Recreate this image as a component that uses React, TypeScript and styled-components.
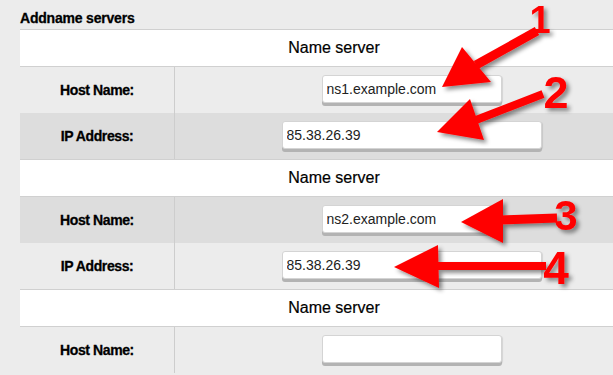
import React from 'react';
import styled, {createGlobalStyle} from "styled-components";

const GlobalStyle = createGlobalStyle`
  html, body {
    margin: 0;
    padding: 0;
    background: #ececec;
    overflow: hidden;
  }
`

type Field = { label: string, value: string, width: number, tone: 'light' | 'dark' }

const servers: Field[][] = [
    [
        {label: 'Host Name:', value: 'ns1.example.com', width: 180, tone: 'light'},
        {label: 'IP Address:', value: '85.38.26.39', width: 260, tone: 'dark'},
    ],
    [
        {label: 'Host Name:', value: 'ns2.example.com', width: 180, tone: 'dark'},
        {label: 'IP Address:', value: '85.38.26.39', width: 260, tone: 'light'},
    ],
    [
        {label: 'Host Name:', value: '', width: 180, tone: 'light'},
    ],
]

const arrows = [
    {tip: '442,87 462,47 491,82', from: [476, 65], to: [537, 31], w: 9, n: '1', nx: 540, ny: 33, size: 38},
    {tip: '437,132 470,99 484,140', from: [476, 120], to: [543, 94], w: 8, n: '2', nx: 556, ny: 108, size: 45},
    {tip: '461,222 503,199 503,243', from: [500, 220], to: [557, 218], w: 9, n: '3', nx: 566, ny: 230, size: 42},
    {tip: '394,267 438,245 439,288', from: [436, 266], to: [546, 266], w: 8, n: '4', nx: 556, ny: 284, size: 46},
]

export default function App() {
    return (
        <Page>
            <GlobalStyle/>
            <Title>Addname servers</Title>

            <Table>
                {servers.map((fields, i) => (
                    <div key={i}>
                        <HeaderRow>Name server</HeaderRow>
                        {fields.map((f, j) => (
                            <Row key={j} tone={f.tone}>
                                <Label>{f.label}</Label>
                                <Value>
                                    <Input $w={f.width} defaultValue={f.value} readOnly/>
                                </Value>
                            </Row>
                        ))}
                    </div>
                ))}
            </Table>

            <Overlay width="613" height="375" viewBox="0 0 613 375">
                <defs>
                    <filter id="shadow" x="-20%" y="-20%" width="140%" height="140%">
                        <feDropShadow dx="3" dy="3" stdDeviation="2" floodColor="#000" floodOpacity="0.45"/>
                    </filter>
                </defs>
                {arrows.map(a => (
                    <g key={a.n} filter="url(#shadow)" fill="#ff0000">
                        <line x1={a.from[0]} y1={a.from[1]} x2={a.to[0]} y2={a.to[1]}
                              stroke="#ff0000" strokeWidth={a.w}/>
                        <polygon points={a.tip}/>
                        <Digit x={a.nx} y={a.ny} fontSize={a.size} textAnchor="middle">{a.n}</Digit>
                    </g>
                ))}
            </Overlay>
        </Page>
    );
}

const Page = styled.div`
  position: relative;
  width: 613px;
  height: 375px;
  overflow: hidden;
  background: #ececec;
  font-family: "Liberation Sans", Arial, sans-serif;
`

const Title = styled.h2`
  margin: 0;
  height: 29px;
  padding: 11px 0 0 20px;
  box-sizing: border-box;
  font-size: 14px;
  font-weight: 700;
  letter-spacing: -0.2px;
  line-height: 14px;
  color: #000;
  -webkit-text-stroke: 0.3px #000;
`

const Table = styled.div`
  width: 628px;
  margin-left: 20px;
`

const HeaderRow = styled.div`
  height: 38px;
  box-sizing: border-box;
  background: #ffffff;
  border-top: 1px solid #d0d0d0;
  border-bottom: 1px solid #d0d0d0;
  display: flex;
  align-items: center;
  justify-content: center;
  font-size: 16px;
  color: #000;
  -webkit-text-stroke: 0.2px #000;
`

const Row = styled.div<{ tone: 'light' | 'dark' }>`
  display: grid;
  grid-template-columns: 154px 1fr;
  height: 46px;
  background: ${p => p.tone === 'dark' ? '#dddddd' : '#ececec'};
`

const Label = styled.div`
  display: flex;
  align-items: center;
  justify-content: center;
  font-size: 14px;
  font-weight: 700;
  letter-spacing: -0.4px;
  color: #000;
  -webkit-text-stroke: 0.3px #000;
`

const Value = styled.div`
  display: flex;
  align-items: center;
  justify-content: center;
  border-left: 1px solid #cdcdcd;
  padding-bottom: 2px;
`

const Input = styled.input<{ $w: number }>`
  width: ${p => p.$w}px;
  height: 28px;
  box-sizing: border-box;
  padding: 0 4px;
  border: 1px solid #d4d4d4;
  border-radius: 3px;
  background: #ffffff;
  box-shadow: 0 3px 0 #b3b3b3, 1px 1px 1px rgba(0, 0, 0, 0.1);
  font-family: "Liberation Sans", Arial, sans-serif;
  font-size: 14px;
  color: #222;
  outline: none;
`

const Overlay = styled.svg`
  position: absolute;
  left: 0;
  top: 0;
  pointer-events: none;
`

const Digit = styled.text`
  font-family: "Liberation Sans", Arial, sans-serif;
  font-weight: 700;
`
